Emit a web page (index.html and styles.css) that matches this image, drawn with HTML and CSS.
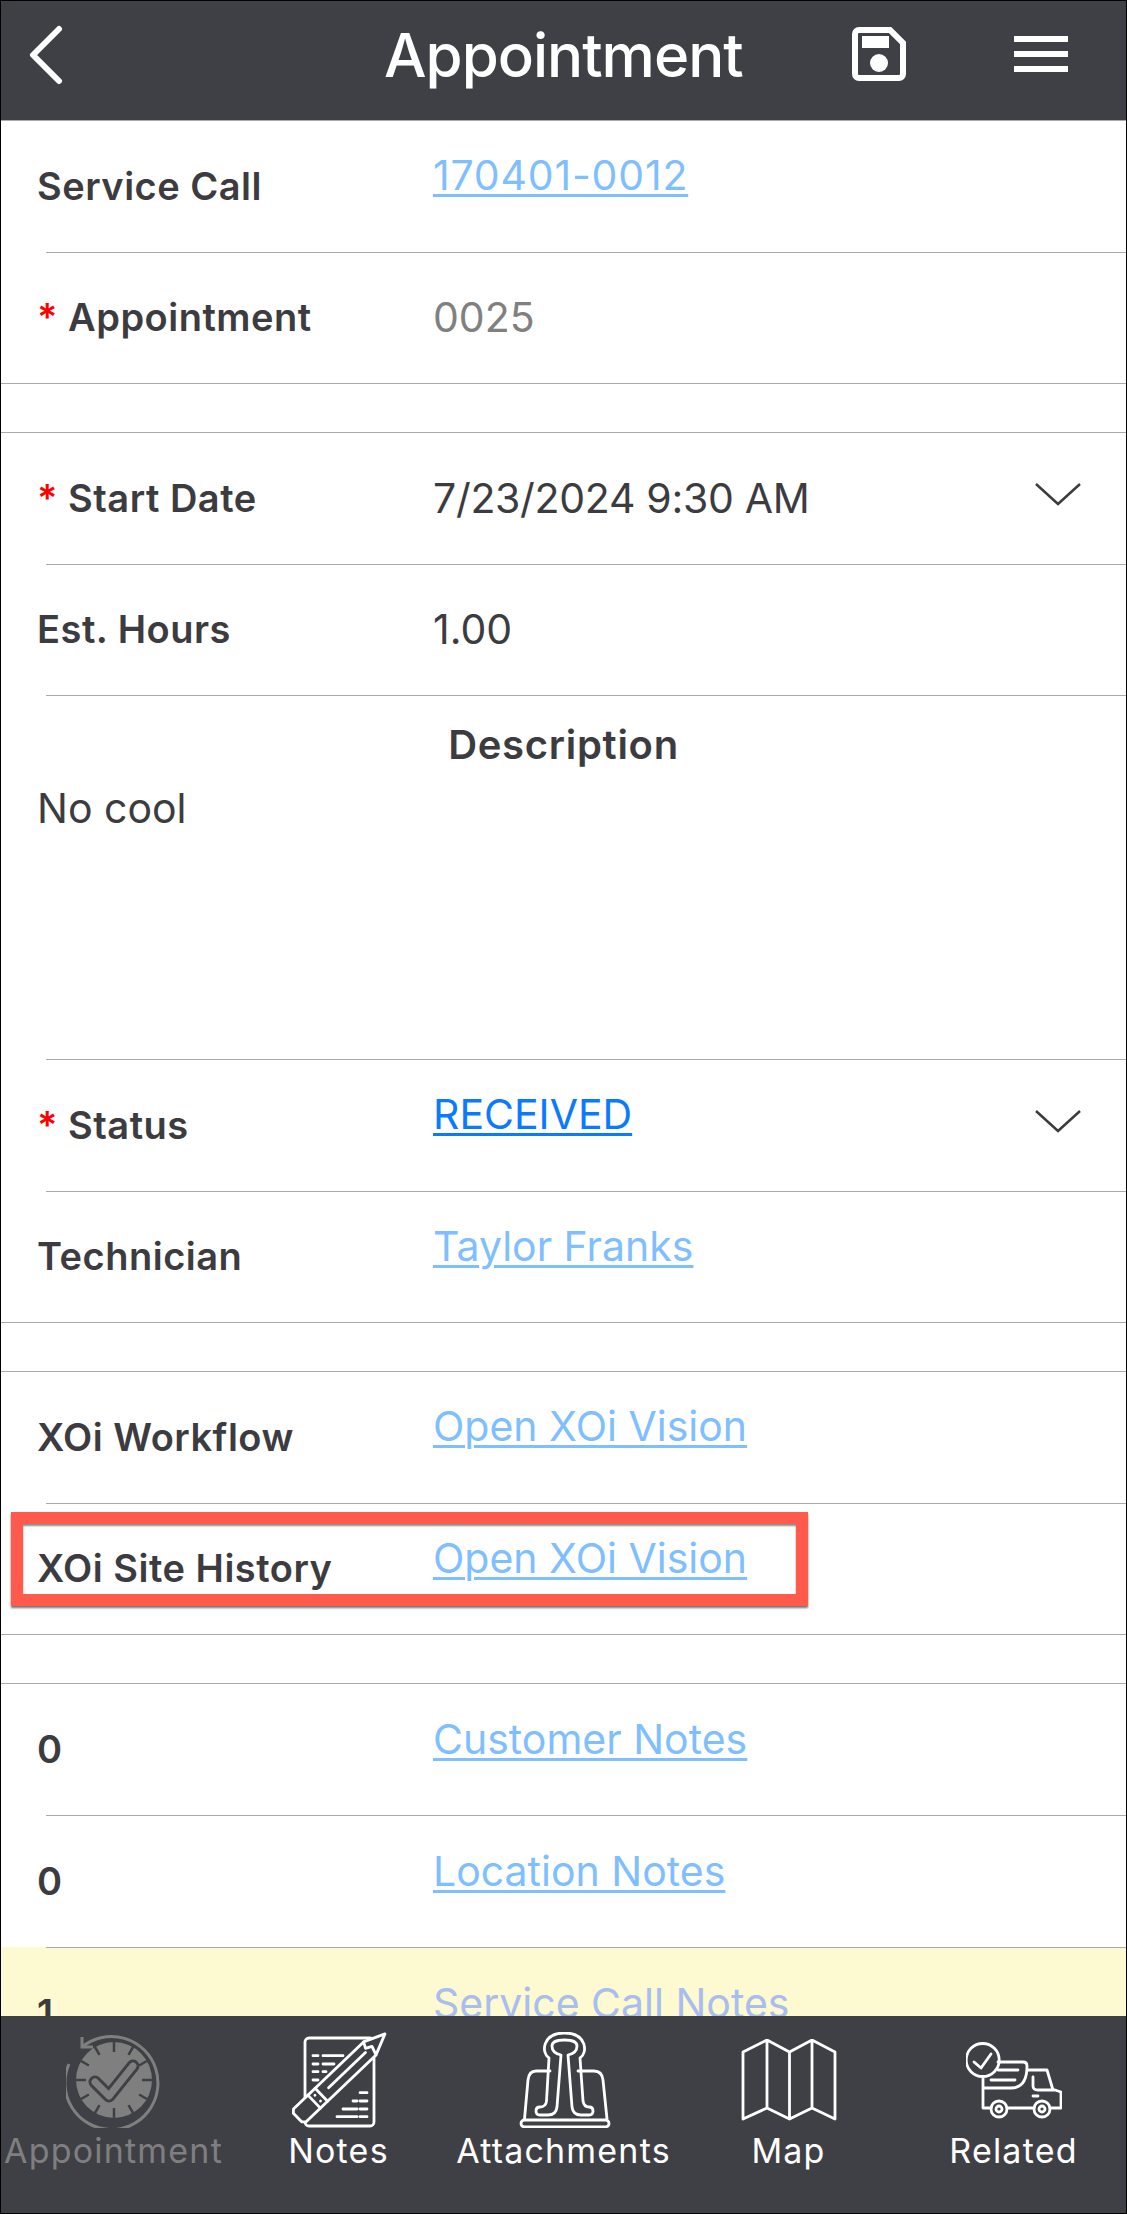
FILE: index.html
```html
<!DOCTYPE html>
<html lang="en">
<head>
  <meta charset="UTF-8">
  <title>Appointment</title>
  <link rel="stylesheet" href="styles.css">
</head>
<body>
  <div class="app">
    <header class="topbar">
      <svg class="back-icon" viewBox="0 0 36 60"><polyline points="32,4 6,30 32,56"/></svg>
      <h1 class="title">Appointment</h1>
      <svg class="save-icon" viewBox="0 0 54 54">
        <path class="outline" d="M7 3H38L51 16V47a4 4 0 0 1-4 4H7a4 4 0 0 1-4-4V7a4 4 0 0 1 4-4Z"/>
        <rect class="solid" x="10" y="9" width="27" height="12"/>
        <circle class="solid" cx="27" cy="36" r="9"/>
      </svg>
      <div class="menu-icon"><span></span><span></span><span></span></div>
    </header>

    <main class="content">
      <section class="group">
        <div class="row">
          <div class="label">Service Call</div>
          <a class="value link num">170401-0012</a>
        </div>
        <hr class="sep">
        <div class="row">
          <div class="label"><span class="req">*</span>Appointment</div>
          <div class="value muted">0025</div>
        </div>
      </section>

      <section class="group">
        <div class="row">
          <div class="label"><span class="req">*</span>Start Date</div>
          <div class="value date">7/23/2024 9:30 AM</div>
          <svg class="chevron" viewBox="0 0 48 26"><polyline points="2,3 24,23 46,3"/></svg>
        </div>
        <hr class="sep">
        <div class="row">
          <div class="label">Est. Hours</div>
          <div class="value">1.00</div>
        </div>
        <hr class="sep">
        <div class="desc">
          <div class="desc-title">Description</div>
          <div class="desc-text">No cool</div>
        </div>
        <hr class="sep">
        <div class="row">
          <div class="label"><span class="req">*</span>Status</div>
          <a class="value link strong">RECEIVED</a>
          <svg class="chevron" viewBox="0 0 48 26"><polyline points="2,3 24,23 46,3"/></svg>
        </div>
        <hr class="sep">
        <div class="row">
          <div class="label">Technician</div>
          <a class="value link">Taylor Franks</a>
        </div>
      </section>

      <section class="group">
        <div class="row">
          <div class="label">XOi Workflow</div>
          <a class="value link">Open XOi Vision</a>
        </div>
        <hr class="sep">
        <div class="row">
          <div class="label">XOi Site History</div>
          <a class="value link">Open XOi Vision</a>
          <div class="callout"></div>
        </div>
      </section>

      <section class="group">
        <div class="row">
          <div class="label">0</div>
          <a class="value link">Customer Notes</a>
        </div>
        <hr class="sep">
        <div class="row">
          <div class="label">0</div>
          <a class="value link">Location Notes</a>
        </div>
        <hr class="sep on-yellow">
        <div class="row flagged">
          <div class="label">1</div>
          <a class="value link">Service Call Notes</a>
        </div>
      </section>
    </main>

    <nav class="tabbar">
      <div class="tab off">
        <svg class="tab-icon" viewBox="0 0 96 96">
          <path class="ring" d="M16 15A46.5 46.5 0 1 1 3 32"/>
          <polyline class="ring" points="16,5 16,15 27,15"/>
          <circle class="disc" cx="48" cy="48" r="38"/>
          <path class="ticks" d="M48 10V20M48 76V86M10 48H20M76 48H86M29 15.1L33.5 22.9M67 15.1L62.5 22.9M29 80.9L33.5 73.1M67 80.9L62.5 73.1M15.1 29L22.9 33.5M80.9 29L73.1 33.5M15.1 67L22.9 62.5M80.9 67L73.1 62.5"/>
          <polyline class="check-back" points="29,50 43,64 67,34"/>
          <polyline class="check-front" points="29,50 43,64 67,34"/>
        </svg>
        <span>Appointment</span>
      </div>
      <div class="tab">
        <svg class="tab-icon" viewBox="5 7 96 96">
          <rect class="line" x="19" y="13" width="69" height="88" rx="4"/>
          <path class="line" d="M27 30.7H32M37 30.7H57M27 39H32M37 39H48M27 46.7H32M37 46.7H40M27 55H32M74 67.7H81M67 76H71M74 76H81M57 84H71M74 84H81M51 91.7H71M74 91.7H81"/>
          <g transform="translate(11.5 92.5) rotate(-43.7)">
            <path class="pencil" d="M3 -9H100L121 0L100 9H3L0 6V-6Z"/>
            <path class="line" d="M23 -9V9M33 -9V9M28 -4V-4M28 4V4M43 0H94M100 -9L97 -3L103 0L100 9"/>
          </g>
        </svg>
        <span>Notes</span>
      </div>
      <div class="tab">
        <svg class="tab-icon" viewBox="5 7 96 96">
          <path class="line" d="M13.5 94L17 55Q18 46 25 46H39M67 46H83Q91 46 92 55L96 94"/>
          <rect class="line" x="10" y="95" width="88" height="7" rx="3.5"/>
          <path class="line" d="M38 33C30 28 31 8 53.5 8C76 8 77 28 69 33L72 76Q73 82 78 82Q82 82 82 86Q82 90 78 90H70Q62 90 61 82L57 30Q66 28 66 21Q66 15 53.5 15Q41 15 41 21Q41 28 50 30L46 82Q45 90 37 90H29Q25 90 25 86Q25 82 29 82Q35 82 35.5 76Z"/>
        </svg>
        <span>Attachments</span>
      </div>
      <div class="tab">
        <svg class="tab-icon map-icon" viewBox="0 0 96 82">
          <path class="line" d="M2 13L26 1L48.5 13L71 1L94 13V80L71 69L48.5 80L26 69L2 80ZM26 1V69M48.5 13V80M71 1V69"/>
        </svg>
        <span>Map</span>
      </div>
      <div class="tab">
        <svg class="tab-icon related-icon" viewBox="11 11 96 78">
          <circle class="line" cx="27.7" cy="30" r="16.5"/>
          <polyline class="line" points="19,32 26,38 36,24"/>
          <path class="line" d="M43 32H68Q72 32 72 36Q72 58 56 58H29M43 40H63M36 50H60"/>
          <path class="line" d="M28 47V78H36M52 78H79M95 78H106V62L100 60H83Q78 60 78 56V47M73 40H92L98 60M78 66H83"/>
          <circle class="line" cx="44" cy="79" r="8"/>
          <circle class="line" cx="44" cy="79" r="3"/>
          <circle class="line" cx="87" cy="79" r="8"/>
          <circle class="line" cx="87" cy="79" r="3"/>
        </svg>
        <span>Related</span>
      </div>
    </nav>
  </div>
</body>
</html>
```

FILE: styles.css
```css
* {
  box-sizing: border-box;
}

html, body {
  margin: 0;
  height: 100%;
}

body {
  background-color: #fff;
  font-family: Inter, "Liberation Sans", sans-serif;
  color: #3c3c40;
}

.app {
  height: 2214px;
  display: flex;
  flex-direction: column;
  overflow: hidden;
  border: 1px solid #000;
}

/* top bar */
.topbar {
  height: 120px;
  flex: none;
  display: flex;
  align-items: center;
  background-color: #3f4045;
  border-bottom: 1px solid #aaa;
  color: #fff;
}

.back-icon {
  width: 36px;
  height: 60px;
  margin: -11px 0 0 26px;
  flex: none;
}

.back-icon polyline {
  fill: none;
  stroke: #fff;
  stroke-width: 6;
  stroke-linecap: round;
  stroke-linejoin: round;
}

.title {
  margin: -11px 0 0 321px;
  font-size: 60px;
  font-weight: 500;
  letter-spacing: -1px;
  flex: none;
  width: 358px;
  white-space: nowrap;
}

.save-icon {
  width: 54px;
  height: 54px;
  margin: -14px 0 0 110px;
  flex: none;
}

.save-icon .outline {
  fill: none;
  stroke: #fff;
  stroke-width: 6;
}

.save-icon .solid {
  fill: #fff;
}

.menu-icon {
  width: 54px;
  margin: -14px 0 0 108px;
  flex: none;
  display: flex;
  flex-direction: column;
  gap: 9px;
}

.menu-icon span {
  height: 6px;
  background-color: #fff;
}

/* form */
.content {
  flex: 1;
  min-height: 0;
  overflow: hidden;
}

.group {
  border-bottom: 1px solid #aaa;
  margin-bottom: 48px;
}

.group + .group {
  border-top: 1px solid #aaa;
}

.row {
  height: 130.5px;
  padding-left: 36px;
  display: flex;
  align-items: center;
  position: relative;
}

.group:last-child .row {
  height: 131px;
}

.sep {
  margin: 0 0 0 45px;
  border: none;
  height: 1px;
  background-color: #aaa;
}

.label {
  width: 396px;
  flex: none;
  margin-top: -1px;
  font-size: 38px;
  font-weight: 600;
  letter-spacing: 0.5px;
}

.req {
  color: #f00;
  margin-right: 10px;
}

.value {
  font-size: 41px;
  margin-top: -1px;
}

.date {
  letter-spacing: -0.3px;
}

.muted {
  color: #808080;
}

.link {
  color: #7fbfff;
  text-decoration: underline;
  text-decoration-thickness: 3px;
  text-underline-offset: 4px;
  margin-top: 0;
  margin-bottom: 22px;
}

.num {
  letter-spacing: 0.8px;
}

.strong {
  color: #0a7aff;
}

.chevron {
  width: 48px;
  height: 26px;
  margin: -8px 44px 0 auto;
}

.chevron polyline {
  fill: none;
  stroke: #3c3c40;
  stroke-width: 2.5;
}

.desc {
  height: 363px;
  padding-top: 24px;
}

.desc-title {
  text-align: center;
  font-size: 40px;
  font-weight: 600;
  letter-spacing: 0.7px;
  margin-bottom: 14px;
}

.desc-text {
  padding-left: 36px;
  font-size: 41px;
}

.flagged {
  background-color: #fdf9d0;
}

.flagged .link {
  color: #a9bdee;
}

.on-yellow {
  box-shadow: -45px 0 0 #fdf9d0;
}

/* red annotation box drawn over the row */
.callout {
  position: absolute;
  left: 10px;
  top: 8px;
  width: 797px;
  height: 94px;
  border: 12px solid #ff5a4c;
  box-shadow: 0 2px 2px rgba(0, 0, 0, 0.55), inset 0 2px 2px rgba(0, 0, 0, 0.45);
}

/* bottom tabs */
.tabbar {
  height: 197px;
  flex: none;
  display: grid;
  grid-template-columns: repeat(5, 1fr);
  background-color: #3f4045;
  color: #fff;
}

.tab {
  display: flex;
  flex-direction: column;
  align-items: center;
  padding-top: 16px;
  font-size: 34px;
  letter-spacing: 1.2px;
}

.tab-icon {
  width: 96px;
  height: 96px;
  flex: none;
}

.tab span {
  margin-top: 2px;
  white-space: nowrap;
}

.map-icon {
  height: 82px;
  margin: 7px 0;
}

.related-icon {
  height: 78px;
  margin: 9px 0;
}

.line {
  fill: none;
  stroke: #fff;
  stroke-width: 2.8;
  stroke-linejoin: round;
  stroke-linecap: round;
}

.pencil {
  fill: #3f4045;
  stroke: #fff;
  stroke-width: 2.8;
  stroke-linejoin: round;
}

.off {
  color: #7f7f7f;
}

.ring {
  fill: none;
  stroke: #7f7f7f;
  stroke-width: 3;
}

.disc {
  fill: #7f7f7f;
}

.ticks {
  fill: none;
  stroke: #3f4045;
  stroke-width: 2.5;
}

.check-back, .check-front {
  fill: none;
  stroke-linecap: round;
  stroke-linejoin: round;
}

.check-back {
  stroke: #3f4045;
  stroke-width: 13;
}

.check-front {
  stroke: #7f7f7f;
  stroke-width: 7;
}
```
